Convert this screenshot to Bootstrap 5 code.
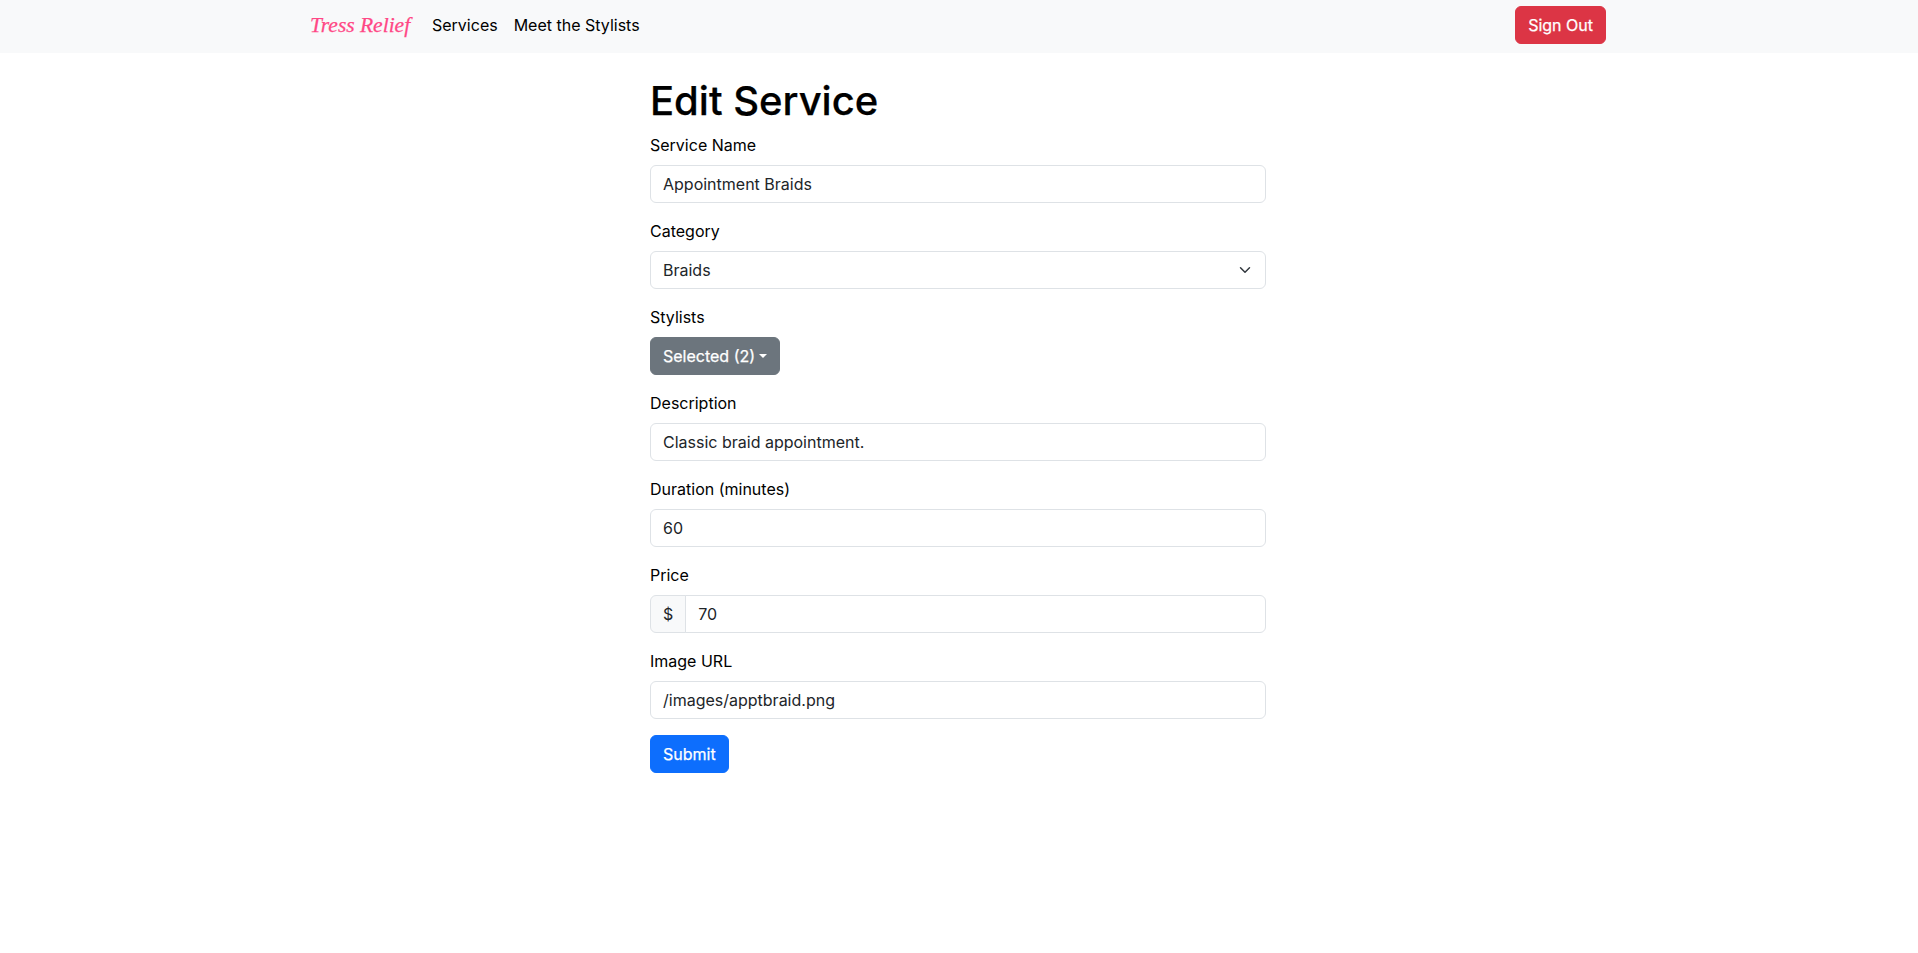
<!DOCTYPE html>
<html lang="en">
<head>
<meta charset="utf-8">
<meta name="viewport" content="width=device-width, initial-scale=1">
<title>Edit Service</title>
<link href="https://cdn.jsdelivr.net/npm/bootstrap@5.3.0/dist/css/bootstrap.min.css" rel="stylesheet">
<style>
body { font-family: Inter, sans-serif; color: #000; }
.navbar { height: 53px; padding: 0 2px 3px 0; }
.brand { color: #ff4785; font: italic 21.5px/30px "Liberation Serif", serif; width: 106px; white-space: nowrap; }
.brand, .btn, h1 { -webkit-text-stroke: .25px currentColor; }
.navbar .nav-link { color: #000; }
.service-form { width: 616px; margin-left: 650px; padding-top: 24px; }
.form-control, .form-select { color: #212529; }
</style>
</head>
<body>
<nav class="navbar navbar-expand bg-body-tertiary">
  <div class="container">
    <a class="navbar-brand brand me-2 p-0" href="#">Tress Relief</a>
    <ul class="navbar-nav me-auto">
      <li class="nav-item"><a class="nav-link" href="#">Services</a></li>
      <li class="nav-item"><a class="nav-link" href="#">Meet the Stylists</a></li>
    </ul>
    <button class="btn btn-danger" type="button">Sign Out</button>
  </div>
</nav>
<main>
  <form class="service-form">
    <h1>Edit Service</h1>
    <div class="mb-3"><label class="form-label" for="name">Service Name</label><input class="form-control" id="name" value="Appointment Braids"></div>
    <div class="mb-3"><label class="form-label" for="cat">Category</label><select class="form-select" id="cat"><option>Braids</option></select></div>
    <div class="mb-3"><label class="form-label d-block">Stylists</label><button class="btn btn-secondary dropdown-toggle" type="button" data-bs-toggle="dropdown">Selected (2)</button></div>
    <div class="mb-3"><label class="form-label" for="desc">Description</label><input class="form-control" id="desc" value="Classic braid appointment."></div>
    <div class="mb-3"><label class="form-label" for="dur">Duration (minutes)</label><input class="form-control" id="dur" value="60"></div>
    <div class="mb-3"><label class="form-label" for="price">Price</label><div class="input-group"><span class="input-group-text">$</span><input class="form-control" id="price" value="70"></div></div>
    <div class="mb-3"><label class="form-label" for="img">Image URL</label><input class="form-control" id="img" value="/images/apptbraid.png"></div>
    <button class="btn btn-primary" type="button">Submit</button>
  </form>
</main>
<script src="https://cdn.jsdelivr.net/npm/bootstrap@5.3.0/dist/js/bootstrap.bundle.min.js"></script>
</body>
</html>
